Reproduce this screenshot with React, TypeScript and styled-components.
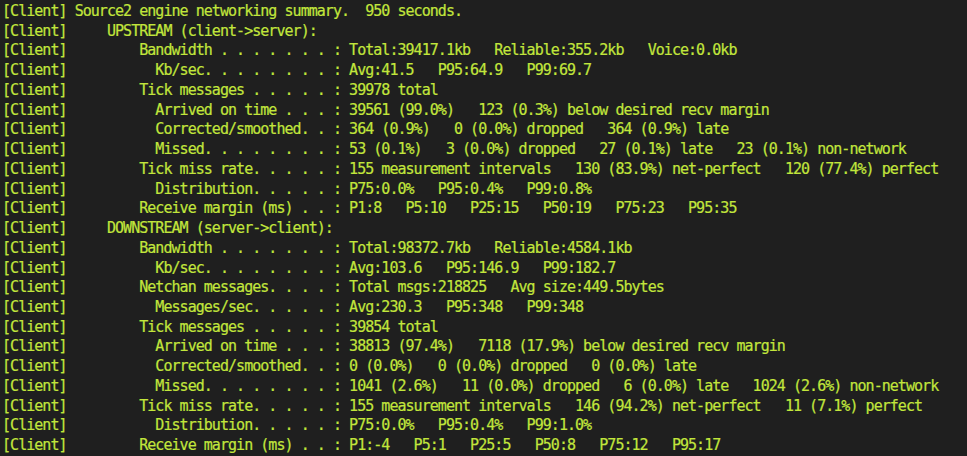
import React from "react";
import styled, { createGlobalStyle } from "styled-components";

const GlobalStyle = createGlobalStyle`
  html, body {
    margin: 0;
    padding: 0;
    background: #1f1f1f;
  }
`;

const Terminal = styled.div`
  width: 967px;
  height: 456px;
  box-sizing: border-box;
  padding: 2px 0 0 2px;
  background: #1f1f1f;
  color: #c2e63c;
  font-family: "DejaVu Sans Mono", "Liberation Mono", monospace;
  font-size: 15px;
  letter-spacing: -0.96px;
  line-height: 19.73px;
  -webkit-text-stroke: 0.2px #c2e63c;
  overflow: hidden;
`;

const Line = styled.div`
  display: flex;
  white-space: pre;
`;

const Prefix = styled.span`
  color: inherit;
`;

const Message = styled.span`
  color: inherit;
`;

const lines: string[] = [
  " Source2 engine networking summary.  950 seconds.",
  "     UPSTREAM (client->server):",
  "         Bandwidth . . . . . . . : Total:39417.1kb   Reliable:355.2kb   Voice:0.0kb",
  "           Kb/sec. . . . . . . . : Avg:41.5   P95:64.9   P99:69.7",
  "         Tick messages . . . . . : 39978 total",
  "           Arrived on time . . . : 39561 (99.0%)   123 (0.3%) below desired recv margin",
  "           Corrected/smoothed. . : 364 (0.9%)   0 (0.0%) dropped   364 (0.9%) late",
  "           Missed. . . . . . . . : 53 (0.1%)   3 (0.0%) dropped   27 (0.1%) late   23 (0.1%) non-network",
  "         Tick miss rate. . . . . : 155 measurement intervals   130 (83.9%) net-perfect   120 (77.4%) perfect",
  "           Distribution. . . . . : P75:0.0%   P95:0.4%   P99:0.8%",
  "         Receive margin (ms) . . : P1:8   P5:10   P25:15   P50:19   P75:23   P95:35",
  "     DOWNSTREAM (server->client):",
  "         Bandwidth . . . . . . . : Total:98372.7kb   Reliable:4584.1kb",
  "           Kb/sec. . . . . . . . : Avg:103.6   P95:146.9   P99:182.7",
  "         Netchan messages. . . . : Total msgs:218825   Avg size:449.5bytes",
  "           Messages/sec. . . . . : Avg:230.3   P95:348   P99:348",
  "         Tick messages . . . . . : 39854 total",
  "           Arrived on time . . . : 38813 (97.4%)   7118 (17.9%) below desired recv margin",
  "           Corrected/smoothed. . : 0 (0.0%)   0 (0.0%) dropped   0 (0.0%) late",
  "           Missed. . . . . . . . : 1041 (2.6%)   11 (0.0%) dropped   6 (0.0%) late   1024 (2.6%) non-network",
  "         Tick miss rate. . . . . : 155 measurement intervals   146 (94.2%) net-perfect   11 (7.1%) perfect",
  "           Distribution. . . . . : P75:0.0%   P95:0.4%   P99:1.0%",
  "         Receive margin (ms) . . : P1:-4   P5:1   P25:5   P50:8   P75:12   P95:17",
];

export default function App() {
  return (
    <>
      <GlobalStyle />
      <Terminal>
        {lines.map((text, i) => (
          <Line key={i}>
            <Prefix>[Client]</Prefix>
            <Message>{text}</Message>
          </Line>
        ))}
      </Terminal>
    </>
  );
}
